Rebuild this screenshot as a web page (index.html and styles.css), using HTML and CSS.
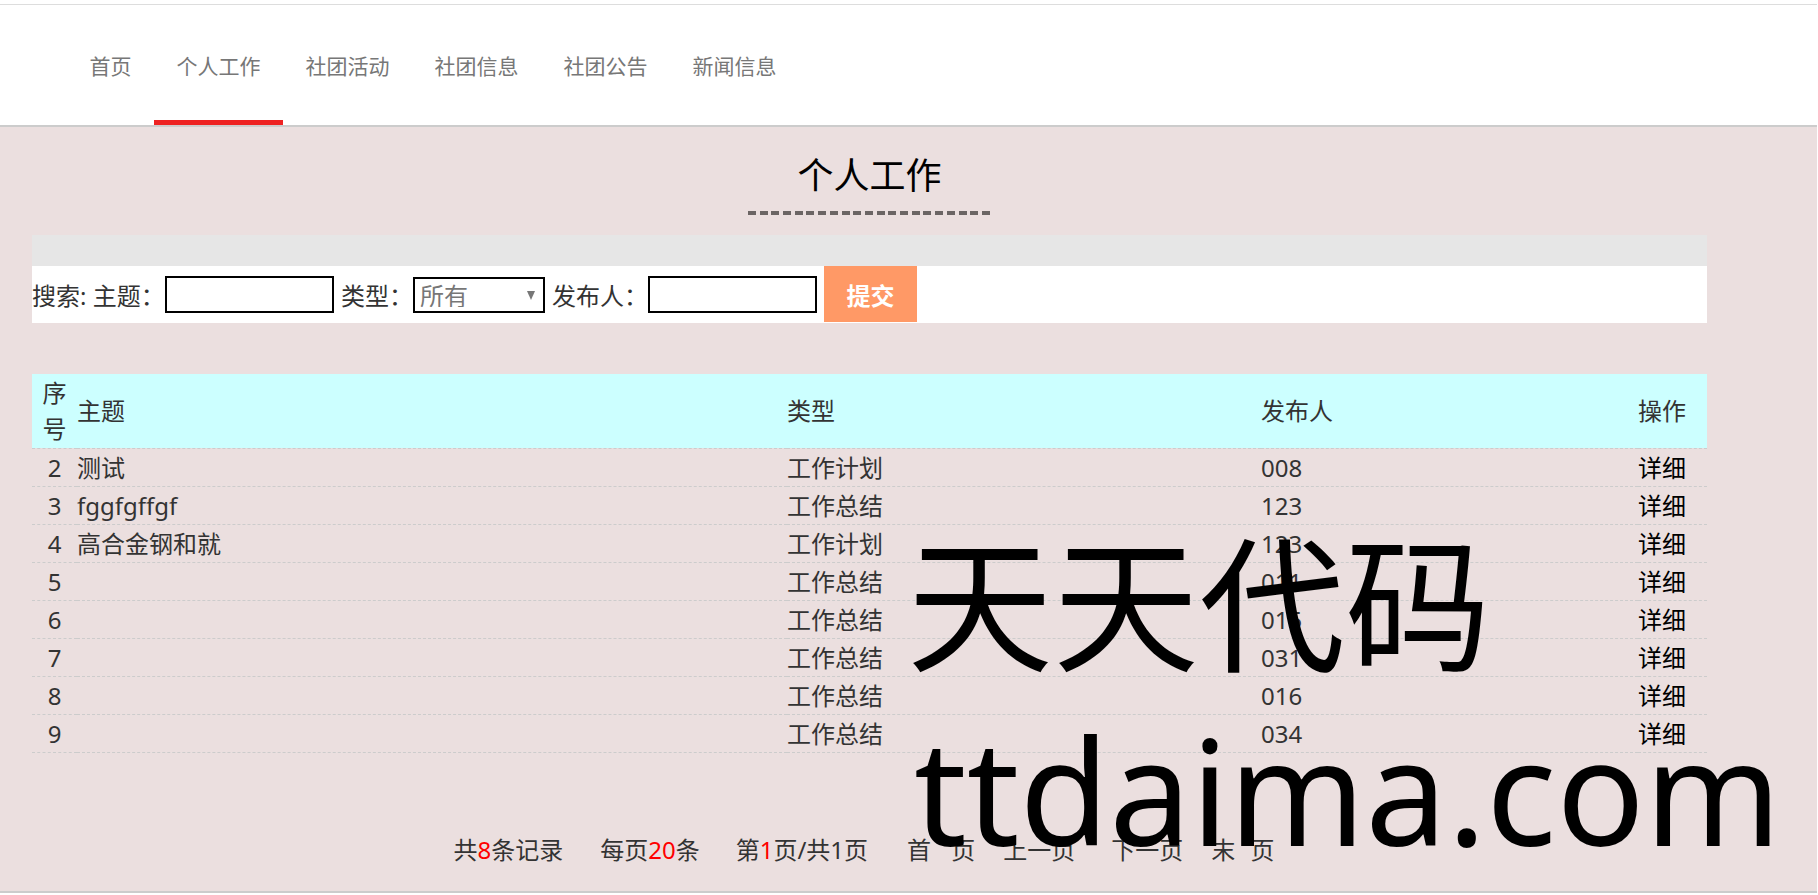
FILE: index.html
```html
<!DOCTYPE html>
<html lang="zh-CN">
<head>
    <meta charset="UTF-8">
    <meta name="viewport" content="width=device-width, initial-scale=1.0">
    <title>个人工作</title>
    <link rel="stylesheet" href="styles.css">
</head>
<body>

    <!-- Top nav -->
    <div class="header">
        <ul class="nav">
            <li><a href="#">首页</a></li>
            <li class="active"><a href="#">个人工作</a></li>
            <li><a href="#">社团活动</a></li>
            <li><a href="#">社团信息</a></li>
            <li><a href="#">社团公告</a></li>
            <li><a href="#">新闻信息</a></li>
        </ul>
    </div>

    <div class="main">
        <div class="content">
            <h2 class="page-title">个人工作</h2>

            <div class="search-bar"></div>
            <form class="search-form">
                <label class="label-subject">搜索: 主题：</label>
                <input type="text" class="text-input">
                <label class="label-type">类型：</label>
                <div class="select-wrap">
                    <select class="type-select">
                        <option>所有</option>
                    </select>
                </div>
                <label class="label-author">发布人：</label>
                <input type="text" class="text-input">
                <button type="button" class="submit-btn">提交</button>
            </form>

            <table class="list">
                <colgroup>
                    <col class="col-no">
                    <col class="col-subject">
                    <col class="col-type">
                    <col class="col-author">
                    <col class="col-action">
                </colgroup>
                <thead>
                    <tr>
                        <th class="no">序号</th>
                        <th>主题</th>
                        <th>类型</th>
                        <th>发布人</th>
                        <th>操作</th>
                    </tr>
                </thead>
                <tbody>
                    <tr><td class="no">2</td><td>测试</td><td>工作计划</td><td>008</td><td><a href="#">详细</a></td></tr>
                    <tr><td class="no">3</td><td>fggfgffgf</td><td>工作总结</td><td>123</td><td><a href="#">详细</a></td></tr>
                    <tr><td class="no">4</td><td>高合金钢和就</td><td>工作计划</td><td>123</td><td><a href="#">详细</a></td></tr>
                    <tr><td class="no">5</td><td></td><td>工作总结</td><td>011</td><td><a href="#">详细</a></td></tr>
                    <tr><td class="no">6</td><td></td><td>工作总结</td><td>015</td><td><a href="#">详细</a></td></tr>
                    <tr><td class="no">7</td><td></td><td>工作总结</td><td>031</td><td><a href="#">详细</a></td></tr>
                    <tr><td class="no">8</td><td></td><td>工作总结</td><td>016</td><td><a href="#">详细</a></td></tr>
                    <tr><td class="no">9</td><td></td><td>工作总结</td><td>034</td><td><a href="#">详细</a></td></tr>
                </tbody>
            </table>

            <div class="pager">
                <span>共<em>8</em>条记录</span>
                <span class="per-page">每页<em>20</em>条</span>
                <span>第<em>1</em>页/共1页</span>
                <a href="#" class="first">首 页</a>
                <a href="#" class="near">上一页</a>
                <a href="#">下一页</a>
                <a href="#" class="last near">末 页</a>
            </div>
        </div>
    </div>

    <!-- Site watermark over the page -->
    <div class="watermark">
        <div class="wm-name">天天代码</div>
        <div class="wm-url">ttdaima.com</div>
    </div>

</body>
</html>
```

FILE: styles.css
```css
html, body {
    margin: 0;
    padding: 0;
    height: 895px;
    overflow: hidden;
}

body {
    position: relative;
    background-color: #fff;
    color: #333;
    font-family: "Noto Sans", "Noto Sans CJK SC", sans-serif;
    font-size: 24px;
}

a {
    color: inherit;
    text-decoration: none;
}

.header {
    margin-top: 4px;
    margin-right: 1px;
    height: 120px;
    background-color: #fff;
    border-top: 1px solid #ddd;
    border-bottom: 2px solid #ccc;
}

.nav {
    display: flex;
    height: 120px;
    margin: 0;
    padding: 0 0 0 67px;
    list-style: none;
}

.nav li {
    box-sizing: border-box;
    height: 120px;
    padding: 0 22.5px;
    font-size: 21px;
    line-height: 122px;
    color: #777;
}

.nav li.active {
    border-bottom: 5px solid #ee2222;
}

.main {
    height: 764px;
    margin-right: 1px;
    background-color: #ebdfdf;
    border-bottom: 2px solid #ccc;
}

.content {
    width: 1675px;
    margin-left: 32px;
}

.page-title {
    box-sizing: border-box;
    width: 244px;
    height: 88px;
    margin: 0 auto 20px;
    padding-top: 22px;
    font-size: 36px;
    font-weight: normal;
    line-height: 54px;
    text-align: center;
    color: #000;
    background-image: repeating-linear-gradient(to right, #6b6564 0, #6b6564 8px, transparent 8px, transparent 11.7px);
    background-size: 100% 4px;
    background-position: left bottom;
    background-repeat: no-repeat;
}

.search-bar {
    height: 31px;
    background-color: #e6e6e6;
}

.search-form {
    display: flex;
    align-items: center;
    height: 57px;
    background-color: #fff;
}

.search-form label {
    flex: none;
    white-space: nowrap;
}

.label-subject {
    width: 133px;
}

.label-type {
    width: 72px;
    margin-left: 7px;
}

.label-author {
    width: 96px;
    margin-left: 7px;
}

.text-input {
    box-sizing: border-box;
    width: 169px;
    height: 37px;
    margin: 0;
    background-color: #fff;
    border: 2px solid #000;
    border-radius: 0;
}

.select-wrap {
    position: relative;
    width: 132px;
    height: 36px;
}

.select-wrap::after {
    content: "";
    position: absolute;
    top: 14px;
    right: 10px;
    border-top: 9px solid #777;
    border-left: 4px solid transparent;
    border-right: 4px solid transparent;
}

.type-select {
    box-sizing: border-box;
    width: 100%;
    height: 100%;
    padding: 0 0 4px 5px;
    appearance: none;
    background-color: #fff;
    border: 2px solid #000;
    border-radius: 0;
    color: #777;
    font-family: inherit;
    font-size: 24px;
}

.submit-btn {
    align-self: flex-start;
    width: 93px;
    height: 56px;
    margin-left: 7px;
    background-color: #ff9966;
    border: none;
    color: #fff;
    font-family: inherit;
    font-size: 24px;
    font-weight: bold;
    cursor: pointer;
}

.list {
    width: 100%;
    margin-top: 51px;
    border-collapse: collapse;
    table-layout: fixed;
}

.col-no { width: 45px; }
.col-subject { width: 710px; }
.col-type { width: 474px; }
.col-author { width: 377px; }
.col-action { width: 69px; }

.list th,
.list td {
    padding: 0;
    font-weight: normal;
    text-align: left;
    border-bottom: 1px dashed #ccc;
}

.list thead tr {
    height: 74px;
    background-color: #ccffff;
}

.list th {
    line-height: 36px;
}

.list tbody tr {
    height: 38px;
}

.list td {
    padding-top: 2px;
    line-height: 34px;
}

.list .no {
    padding-left: 10px;
    padding-right: 10px;
    text-align: center;
}

.list td a {
    color: #000;
}

.pager {
    display: flex;
    justify-content: center;
    margin-top: 79px;
    padding-right: 11px;
    line-height: 36px;
}

.pager > * {
    margin-left: 36px;
}

.pager > :first-child {
    margin-left: 0;
}

.pager em {
    font-style: normal;
    color: #f00;
}

.pager .per-page {
    margin-left: 37px;
}

.pager .first {
    margin-left: 39px;
    word-spacing: 14px;
}

.pager .near {
    margin-left: 28px;
}

.pager .last {
    word-spacing: 9px;
}

.watermark {
    position: absolute;
    top: 509px;
    left: 907px;
    color: #000;
    white-space: nowrap;
    pointer-events: none;
}

.wm-name {
    font-size: 146px;
    line-height: 190px;
}

.wm-url {
    padding-left: 7px;
    font-size: 146px;
    line-height: 182px;
}
```
